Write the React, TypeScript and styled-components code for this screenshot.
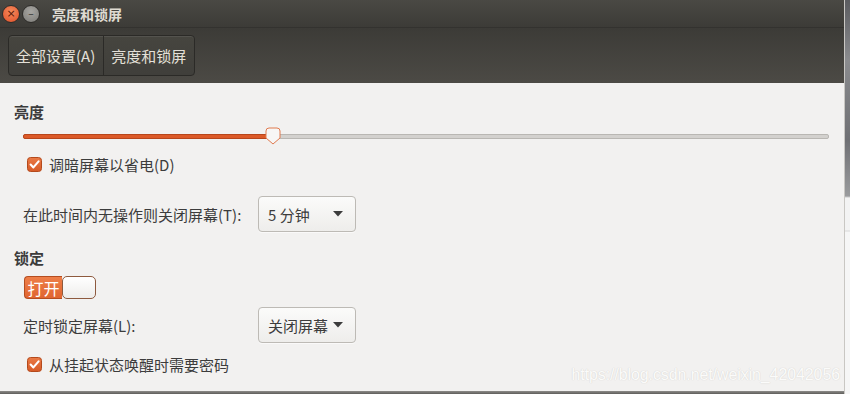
import React from 'react';
import styled, { createGlobalStyle } from 'styled-components';

const GlobalStyle = createGlobalStyle`
  html, body {
    margin: 0;
    padding: 0;
    width: 850px;
    height: 394px;
    overflow: hidden;
    background: #f7f7f7;
    font-family: 'Noto Sans CJK SC', 'Noto Sans', sans-serif;
  }
`;

function Checkbox() {
  return (
    <svg width="15" height="15" viewBox="0 0 15 15">
      <defs>
        <linearGradient id="cbg" x1="0" y1="0" x2="0" y2="1">
          <stop offset="0" stopColor="#ea7a46" />
          <stop offset="1" stopColor="#d65a26" />
        </linearGradient>
      </defs>
      <rect x="0.5" y="0.5" width="14" height="14" rx="3" fill="url(#cbg)" stroke="#b44a1c" />
      <path d="M3.6 7.6 L6.4 10.4 L11.6 4.4" fill="none" stroke="#fff" strokeWidth="2.1" strokeLinecap="round" strokeLinejoin="round" />
    </svg>
  );
}

function Caret() {
  return (
    <svg width="10" height="6" viewBox="0 0 10 6">
      <path d="M0 0 H10 L5 5.5 Z" fill="#3c3c3c" />
    </svg>
  );
}

function App() {
  return (
    <Screen>
      <GlobalStyle />
      <Window>
        <TitleBar>
          <WinButton kind="close">×</WinButton>
          <WinButton kind="min">–</WinButton>
          <Title>亮度和锁屏</Title>
        </TitleBar>
        <Toolbar>
          <NavGroup>
            <NavButton>全部设置(A)</NavButton>
            <NavButton>亮度和锁屏</NavButton>
          </NavGroup>
        </Toolbar>
        <Content>
          <Heading top={18}>亮度</Heading>
          <SliderRow>
            <Track>
              <Fill style={{ width: `${(250 / 806) * 100}%` }} />
              <Thumb>
                <svg width="16" height="18" viewBox="0 0 16 18">
                  <path
                    d="M1 4 Q1 1 4 1 H12 Q15 1 15 4 V11 L8 17 L1 11 Z"
                    fill="#f7f6f5"
                    stroke="#e07a4f"
                    strokeWidth="1"
                  />
                </svg>
              </Thumb>
            </Track>
          </SliderRow>
          <CheckRow top={2}>
            <Checkbox />
            <span>调暗屏幕以省电(D)</span>
          </CheckRow>
          <FieldRow top={18}>
            <FieldLabel>在此时间内无操作则关闭屏幕(T):</FieldLabel>
            <Dropdown>
              <span>5 分钟</span>
              <Caret />
            </Dropdown>
          </FieldRow>
          <Heading top={15}>锁定</Heading>
          <Switch>
            <SwitchOn>打开</SwitchOn>
            <SwitchKnob />
          </Switch>
          <FieldRow top={8}>
            <FieldLabel>定时锁定屏幕(L):</FieldLabel>
            <Dropdown>
              <span>关闭屏幕</span>
              <Caret />
            </Dropdown>
          </FieldRow>
          <CheckRow top={7}>
            <Checkbox />
            <span>从挂起状态唤醒时需要密码</span>
          </CheckRow>
          <Watermark>https://blog.csdn.net/weixin_42042056</Watermark>
        </Content>
        <BottomEdge />
      </Window>
      <SideStrip />
    </Screen>
  );
}

export default App;

const Screen = styled.div`
  display: flex;
  width: 850px;
  height: 394px;
`;

const Window = styled.div`
  width: 845px;
  height: 394px;
  display: flex;
  flex-direction: column;
  border-right: 1px solid #c9c7c3;
  box-sizing: border-box;
`;

const TitleBar = styled.div`
  height: 27px;
  flex: none;
  display: flex;
  align-items: center;
  padding-left: 2px;
  background: linear-gradient(#4a4944, #3c3b37);
`;

const WinButton = styled.div<{ kind: 'close' | 'min' }>`
  width: 16px;
  height: 16px;
  border-radius: 50%;
  margin-right: 2px;
  display: flex;
  align-items: center;
  justify-content: center;
  font-family: 'DejaVu Sans', sans-serif;
  font-size: 11px;
  line-height: 1;
  color: ${({ kind }) => (kind === 'close' ? '#5a1a08' : '#3a3a38')};
  background: ${({ kind }) =>
    kind === 'close'
      ? 'radial-gradient(circle at 50% 35%, #f58a5c, #e0512a)'
      : 'radial-gradient(circle at 50% 35%, #a7a6a2, #7d7c78)'};
  border: 1px solid #2e2d2a;
`;

const Title = styled.div`
  margin-left: 10px;
  color: #dfdbd2;
  font-size: 14px;
  font-weight: bold;
`;

const Toolbar = styled.div`
  height: 56px;
  flex: none;
  display: flex;
  align-items: center;
  padding-left: 8px;
  background: linear-gradient(#3c3b37, #4c4a45);
  border-top: 1px solid #33322f;
  box-sizing: border-box;
`;

const NavGroup = styled.div`
  display: flex;
  height: 39px;
  border: 1px solid #2b2a27;
  border-radius: 4px;
  box-shadow: inset 0 1px 0 rgba(255, 255, 255, 0.08);
  background: linear-gradient(#46453f, #403f3b);
`;

const NavButton = styled.div`
  display: flex;
  align-items: center;
  padding: 0 8px 0 7px;
  color: #e4e0d8;
  font-size: 15px;

  & + & {
    border-left: 1px solid #2b2a27;
  }
`;

const Content = styled.div`
  position: relative;
  flex: 1;
  display: flex;
  flex-direction: column;
  align-items: flex-start;
  background: #f2f1f0;
  color: #3c3c3c;
  font-size: 15px;
`;

const Heading = styled.div<{ top: number }>`
  margin: ${({ top }) => top}px 0 0 14px;
  height: 22px;
  line-height: 22px;
  font-weight: bold;
`;

const SliderRow = styled.div`
  align-self: stretch;
  height: 24px;
  margin: 1px 15px 0 23px;
  display: flex;
  align-items: center;
`;

const Track = styled.div`
  position: relative;
  flex: 1;
  height: 3px;
  border-radius: 2px;
  background: #d3d1ce;
  border: 1px solid #b9b7b3;
`;

const Fill = styled.div`
  height: 100%;
  border-radius: 2px;
  background: #dc5a28;
  margin: -1px 0 0 -1px;
  border: 1px solid #b8461b;
`;

const Thumb = styled.div`
  position: absolute;
  left: calc(${(250 / 806) * 100}% - 8px);
  top: -8px;
  width: 16px;
  height: 18px;
  display: flex;
`;

const CheckRow = styled.div<{ top: number }>`
  margin: ${({ top }) => top}px 0 0 27px;
  height: 28px;
  display: flex;
  align-items: center;
  gap: 7px;
`;

const FieldRow = styled.div<{ top: number }>`
  margin: ${({ top }) => top}px 0 0 23px;
  height: 36px;
  display: flex;
  align-items: center;
`;

const FieldLabel = styled.div`
  width: 235px;
`;

const Dropdown = styled.div`
  width: 98px;
  height: 36px;
  box-sizing: border-box;
  display: flex;
  align-items: center;
  justify-content: space-between;
  padding: 0 12px 0 9px;
  border: 1px solid #bdbab5;
  border-radius: 4px;
  background: linear-gradient(#fbfbfa, #eeedeb);
  box-shadow: 0 1px 0 rgba(255, 255, 255, 0.6);
`;

const Switch = styled.div`
  margin: 7px 0 0 24px;
  display: flex;
  height: 23px;
`;

const SwitchOn = styled.div`
  width: 38px;
  box-sizing: border-box;
  display: flex;
  align-items: center;
  justify-content: center;
  font-size: 16px;
  color: #fff;
  background: linear-gradient(#ee7e48, #e06530);
  border: 1px solid #b54d20;
  border-right: none;
  border-radius: 4px 0 0 4px;
`;

const SwitchKnob = styled.div`
  width: 34px;
  box-sizing: border-box;
  background: linear-gradient(#ffffff, #eeedeb);
  border: 1px solid #8e5a3e;
  border-radius: 5px;
`;

const Watermark = styled.div`
  position: absolute;
  right: 4px;
  bottom: 7px;
  font-family: 'Liberation Sans', Arial, sans-serif;
  font-size: 16px;
  letter-spacing: -0.1px;
  color: #fbfbfa;
  text-shadow: 0 0 1px #d6d4d1, 0 0 1px #dddbd8;
`;

const BottomEdge = styled.div`
  height: 3px;
  flex: none;
  background: linear-gradient(#8d8c89, #5e5d5a);
`;

const SideStrip = styled.div`
  width: 5px;
  height: 394px;
  background: linear-gradient(
    #5b5c60 0,
    #8a8b8e 60px,
    #6f7074 140px,
    #9a9b9d 196px,
    #f3f3f3 198px,
    #f3f3f3 230px,
    #d8d8d8 231px,
    #f6f6f6 232px,
    #f6f6f6 394px
  );
`;
